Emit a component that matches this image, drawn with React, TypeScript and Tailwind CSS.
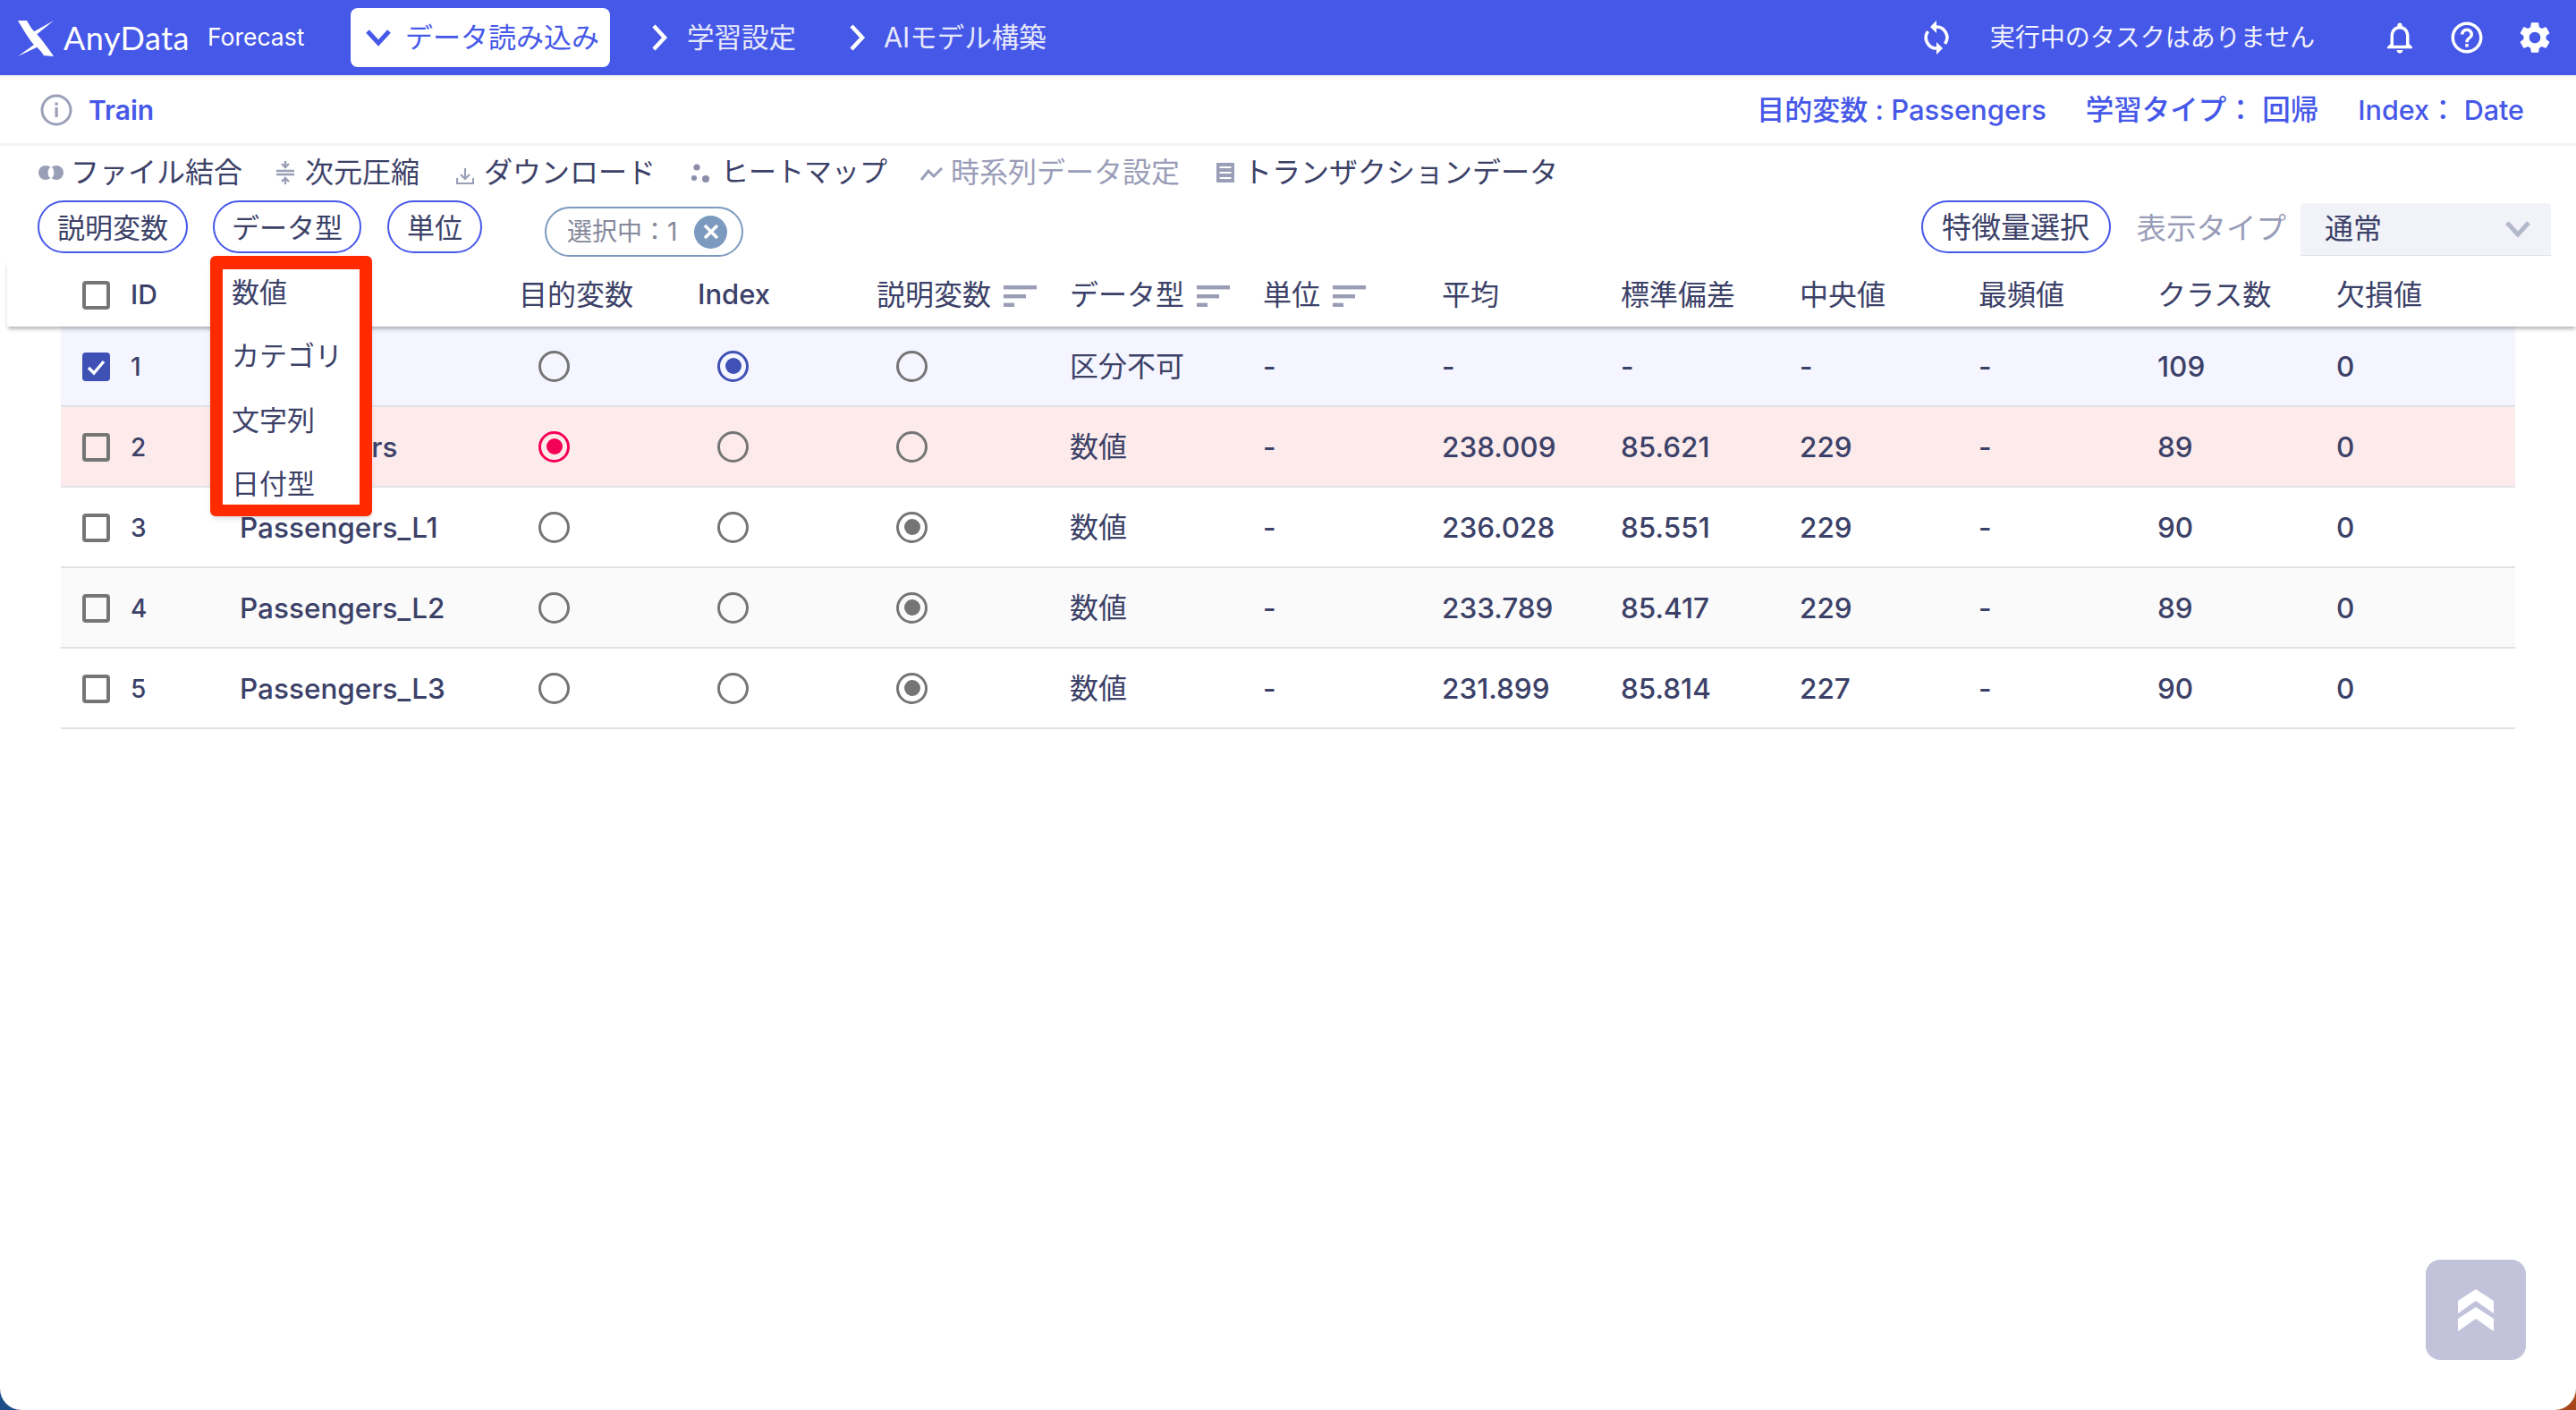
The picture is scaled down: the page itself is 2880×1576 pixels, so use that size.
import { MdNotificationsNone, MdHelpOutline, MdSettings } from "react-icons/md";

const FONT = "font-['Inter','Noto_Sans_CJK_JP',sans-serif]";

const COLS = "grid grid-cols-[200px_312px_200px_200px_216px_216px_200px_200px_200px_200px_200px_200px_199px] items-center";

type Row = {
  id: number;
  name: string;
  target?: boolean;
  index?: boolean;
  expl?: boolean;
  type: string;
  vals: string[];
  bg: string;
  checked?: boolean;
};

const rows: Row[] = [
  { id: 1, name: "Date", index: true, checked: true, type: "区分不可", vals: ["-", "-", "-", "-", "-", "109", "0"], bg: "bg-[#f4f5fe]" },
  { id: 2, name: "Passengers", target: true, type: "数値", vals: ["-", "238.009", "85.621", "229", "-", "89", "0"], bg: "bg-[#fdebeb]" },
  { id: 3, name: "Passengers_L1", expl: true, type: "数値", vals: ["-", "236.028", "85.551", "229", "-", "90", "0"], bg: "bg-white" },
  { id: 4, name: "Passengers_L2", expl: true, type: "数値", vals: ["-", "233.789", "85.417", "229", "-", "89", "0"], bg: "bg-[#fafafa]" },
  { id: 5, name: "Passengers_L3", expl: true, type: "数値", vals: ["-", "231.899", "85.814", "227", "-", "90", "0"], bg: "bg-white" },
];

function Logo() {
  return (
    <svg width="40" height="41" viewBox="0 0 40 41" className="shrink-0">
      <path d="M0 1 L10 1 C14 8 16 11 20 15 C26 21 34 32 40 41 L29 40 C25 34 21 30 17 27 C11 20 5 9 0 1 Z" fill="#fff" />
      <polygon points="40,1 15,15 18,19" fill="#fff" />
      <polygon points="0,41 22,25 25,29" fill="#fff" />
    </svg>
  );
}

function SyncIcon() {
  return (
    <svg width="30" height="38" viewBox="0 0 30 38" className="shrink-0">
      <path d="M14 7 A12 12 0 0 1 24.5 26" fill="none" stroke="#fff" strokeWidth="3.6" />
      <path d="M16 31 A12 12 0 0 1 5.5 12" fill="none" stroke="#fff" strokeWidth="3.6" />
      <polygon points="8,7 15,0 15,14" fill="#fff" />
      <polygon points="22,31 15,24 15,38" fill="#fff" />
    </svg>
  );
}

function ChevronDown({ className }: { className?: string }) {
  return (
    <svg width="30" height="20" viewBox="0 0 30 20" className={className}>
      <path d="M3 3 L15 16 L27 3" fill="none" stroke="currentColor" strokeWidth="5" />
    </svg>
  );
}

function ChevronRight() {
  return (
    <svg width="20" height="30" viewBox="0 0 20 30" className="text-white">
      <path d="M4 2 L16 15 L4 28" fill="none" stroke="currentColor" strokeWidth="4.5" />
    </svg>
  );
}

function SortIcon() {
  return (
    <svg width="37" height="24" viewBox="0 0 37 24" className="ml-[14px] mt-[2px] shrink-0">
      <rect x="0" y="0" width="37" height="4.4" fill="#9a9db5" />
      <rect x="0" y="10" width="25" height="4.4" fill="#9a9db5" />
      <rect x="0" y="19.6" width="12" height="4.4" fill="#9a9db5" />
    </svg>
  );
}

function Chip({ children, className }: { children: React.ReactNode; className?: string }) {
  return (
    <div className={`h-[59px] flex items-center justify-center pt-[3px] rounded-full border-2 border-[#4658e8] text-[#3c4168] ${className ?? ""}`}>
      {children}
    </div>
  );
}

function Check({ checked }: { checked?: boolean }) {
  if (checked) {
    return (
      <div className="w-[31px] h-[32px] rounded-[4px] bg-[#3f51b5] flex items-center justify-center">
        <svg width="25" height="25" viewBox="0 0 25 25">
          <path d="M4 13 L10 19 L21 6" fill="none" stroke="#fff" strokeWidth="3.4" />
        </svg>
      </div>
    );
  }
  return <div className="w-[31px] h-[32px] rounded-[4px] border-[4px] border-[#757575]" />;
}

function Radio({ on, color }: { on?: boolean; color?: string }) {
  if (on && color === "red") {
    return (
      <div className="w-[35px] h-[35px] rounded-full border-[3px] border-[#f50057] flex items-center justify-center ml-[22px] -mt-[2px]">
        <div className="w-[18px] h-[18px] rounded-full bg-[#f50057]" />
      </div>
    );
  }
  if (on && color === "blue") {
    return (
      <div className="w-[35px] h-[35px] rounded-full border-[3px] border-[#3f51b5] flex items-center justify-center ml-[22px] -mt-[2px]">
        <div className="w-[18px] h-[18px] rounded-full bg-[#3f51b5]" />
      </div>
    );
  }
  if (on) {
    return (
      <div className="w-[35px] h-[35px] rounded-full border-[3px] border-[#757575] flex items-center justify-center ml-[22px] -mt-[2px]">
        <div className="w-[18px] h-[18px] rounded-full bg-[#757575]" />
      </div>
    );
  }
  return <div className="w-[35px] h-[35px] rounded-full border-[3px] border-[#757575] ml-[22px] -mt-[2px]" />;
}

export default function App() {
  return (
    <div className="w-[2880px] h-[1576px] bg-[linear-gradient(90deg,#1d4e89_50%,#a8481a_50%)]">
      <div className={`relative w-[2880px] h-[1576px] overflow-hidden rounded-b-[24px] bg-white ${FONT}`}>
        {/* top bar */}
        <div className="h-[84px] bg-[#4658e8] flex items-center text-white">
          <div className="ml-[20px]">
            <Logo />
          </div>
          <span className="ml-[11px] w-[140px] text-[36px] font-['Lato',sans-serif] tracking-[0.5px]">AnyData</span>
          <span className="ml-[21px] w-[110px] text-[26.5px] font-['Inter',sans-serif] whitespace-nowrap">Forecast</span>
          <div className="ml-[50px] w-[290px] h-[66px] bg-white rounded-[8px] flex items-center text-[#4658e8]">
            <ChevronDown className="ml-[16px]" />
            <span className="ml-[15px] text-[31px] whitespace-nowrap">データ読み込み</span>
          </div>
          <div className="ml-[45px]">
            <ChevronRight />
          </div>
          <span className="ml-[21px] text-[30.5px] text-[#e6e8fc]">学習設定</span>
          <div className="ml-[58px]">
            <ChevronRight />
          </div>
          <span className="ml-[20px] text-[30.5px] text-[#e6e8fc]">AIモデル構築</span>
          <div className="ml-auto flex items-center">
            <SyncIcon />
            <span className="ml-[45px] text-[28px] text-[#f2f3fe]">実行中のタスクはありません</span>
            <MdNotificationsNone size={42} className="ml-[74px]" />
            <MdHelpOutline size={42} className="ml-[33px]" />
            <MdSettings size={42} className="ml-[34px] mr-[25px]" />
          </div>
        </div>

        {/* dataset info */}
        <div className="h-[79px] border-t-2 border-b-[3px] border-[#f3f3f8] flex items-center text-[#4658e8] font-medium">
          <svg width="36" height="36" viewBox="0 0 36 36" className="ml-[45px]">
            <circle cx="18" cy="18" r="16" fill="none" stroke="#9a9fb8" strokeWidth="3" />
            <rect x="16.5" y="15" width="3.2" height="11" fill="#9a9fb8" />
            <rect x="16.5" y="9.5" width="3.2" height="3.2" fill="#9a9fb8" />
          </svg>
          <span className="ml-[18px] text-[30px] font-semibold">Train</span>
          <span className="ml-auto whitespace-nowrap text-[31px]">目的変数 : Passengers</span>
          <span className="ml-[44px] whitespace-nowrap text-[31.5px]">学習タイプ： 回帰</span>
          <span className="ml-[44px] mr-[58px] whitespace-nowrap text-[30.5px]">Index： Date</span>
        </div>

        {/* tools */}
        <div className="h-[61px] flex items-center text-[#3c4168] text-[32px] pb-[2px]">
          <svg width="28" height="16" viewBox="0 0 28 16" className="ml-[43px]">
            <circle cx="8" cy="8" r="8" fill="#9a9fb8" />
            <circle cx="20" cy="8" r="8" fill="#9a9fb8" />
            <ellipse cx="14" cy="8" rx="3.4" ry="6" fill="#fff" />
          </svg>
          <span className="ml-[8px] whitespace-nowrap">ファイル結合</span>
          <svg width="20" height="26" viewBox="0 0 20 26" className="ml-[38px]">
            <path d="M10 0 V6 M6 3 L10 7 L14 3 M10 26 V20 M6 23 L10 19 L14 23" fill="none" stroke="#9a9fb8" strokeWidth="2.4" />
            <path d="M0 11 H20 M0 15 H20" stroke="#9a9fb8" strokeWidth="2.4" />
          </svg>
          <span className="ml-[12px] whitespace-nowrap">次元圧縮</span>
          <svg width="20" height="20" viewBox="0 0 20 20" className="ml-[41px] mt-[8px]">
            <path d="M10 1 V12 M5 8 L10 13 L15 8 M1 12 V18 H19 V12" fill="none" stroke="#9a9fb8" strokeWidth="2.2" />
          </svg>
          <span className="ml-[11px] whitespace-nowrap">ダウンロード</span>
          <svg width="20" height="22" viewBox="0 0 20 22" className="ml-[40px] mt-[2px]">
            <circle cx="6" cy="4" r="3.6" fill="#8a8ea8" />
            <circle cx="3" cy="16" r="3" fill="#8a8ea8" />
            <circle cx="16" cy="17" r="4" fill="#8a8ea8" />
          </svg>
          <span className="ml-[13px] whitespace-nowrap text-[31px]">ヒートマップ</span>
          <svg width="27" height="18" viewBox="0 0 27 18" className="ml-[36px] mt-[2px]">
            <path d="M2 16 L10 6 L16 12 L25 3" fill="none" stroke="#9a9fb8" strokeWidth="3" />
          </svg>
          <span className="ml-[8px] whitespace-nowrap text-[#9a9db8]">時系列データ設定</span>
          <svg width="22" height="24" viewBox="0 0 22 24" className="ml-[40px]">
            <path d="M1 1 H21 V23 H1 Z" fill="#9a9fb8" />
            <path d="M4.5 6 H17.5 M4.5 12 H17.5 M4.5 18 H17.5" stroke="#fff" strokeWidth="2" />
          </svg>
          <span className="ml-[9px] whitespace-nowrap">トランザクションデータ</span>
        </div>

        {/* filter chips */}
        <div className="h-[67px] flex items-start">
          <Chip className="ml-[42px] w-[168px] text-[31px]">説明変数</Chip>
          <Chip className="ml-[28px] w-[166px] text-[31px]">データ型</Chip>
          <Chip className="ml-[29px] w-[106px] text-[31px]">単位</Chip>
          <div className="ml-[70px] mt-[7px] w-[222px] h-[56px] rounded-full border-2 border-[#7c9abf] flex items-center text-[#85889a] text-[28px]">
            <span className="ml-[23px] whitespace-nowrap">選択中：1</span>
            <div className="ml-[19px] w-[37px] h-[37px] rounded-full bg-[#7c9abf] flex items-center justify-center">
              <svg width="20" height="20" viewBox="0 0 20 20">
                <path d="M3 3 L17 17 M17 3 L3 17" stroke="#fff" strokeWidth="3.6" />
              </svg>
            </div>
          </div>
          <Chip className="ml-auto w-[212px] text-[33px]">特徴量選択</Chip>
          <span className="ml-[29px] h-[59px] pt-[3px] flex items-center text-[#9a9db8] text-[33.5px] whitespace-nowrap">表示タイプ</span>
          <div className="ml-[16px] mr-[28px] mt-[3px] w-[280px] h-[59px] bg-[#f1f3f8] rounded-t-[4px] border-b border-[#e0e2ea] flex items-center justify-between text-[#3c4168] text-[32px]">
            <span className="ml-[27px]">通常</span>
            <ChevronDown className="mr-[22px] text-[#b4b8cc]" />
          </div>
        </div>

        {/* table head */}
        <div className={`${COLS} relative z-10 ml-[8px] h-[74px] pl-[60px] pt-[3px] bg-white shadow-[0_4px_4px_-1px_rgba(60,60,70,0.35)] text-[#3c4168] text-[32px]`}>
          <div className="flex items-center pl-[24px]">
            <Check />
            <span className="ml-[23px] text-[30px] font-medium">ID</span>
          </div>
          <div />
          <div>目的変数</div>
          <div className="text-[31px] font-medium">Index</div>
          <div className="flex items-center">
            説明変数
            <SortIcon />
          </div>
          <div className="flex items-center">
            データ型
            <SortIcon />
          </div>
          <div className="flex items-center">
            単位
            <SortIcon />
          </div>
          <div>平均</div>
          <div>標準偏差</div>
          <div>中央値</div>
          <div>最頻値</div>
          <div>クラス数</div>
          <div>欠損値</div>
        </div>

        {/* table body */}
        <div className="mx-[68px] text-[#3c4168] text-[31.5px] font-medium">
          {rows.map((r) => (
            <div key={r.id} className={`${COLS} h-[90px] pt-[2px] border-b-2 border-[#e2e2e6] ${r.bg}`}>
              <div className="flex items-center pl-[24px]">
                <Check checked={r.checked} />
                <span className="ml-[23px] text-[28px]">{r.id}</span>
              </div>
              <div>{r.name}</div>
              <div>
                <Radio on={r.target} color="red" />
              </div>
              <div>
                <Radio on={r.index} color="blue" />
              </div>
              <div>
                <Radio on={r.expl} />
              </div>
              <div className="text-[32px] font-normal">{r.type}</div>
              {r.vals.map((v, i) => (
                <div key={i}>{v}</div>
              ))}
            </div>
          ))}
        </div>

        {/* data type dropdown with red annotation */}
        <div className="absolute left-[235px] top-[286px] z-20 w-[181px] h-[291px] rounded-[6px] border-x-[14px] border-t-[15px] border-b-[13px] border-[#ff2a00] bg-white shadow-md text-[#3c4168] text-[31px]">
          <div className="flex flex-col -mt-[10px]">
            <div className="h-[71.5px] pl-[10px] flex items-center">数値</div>
            <div className="h-[71.5px] pl-[10px] flex items-center whitespace-nowrap">カテゴリ</div>
            <div className="h-[71.5px] pl-[10px] flex items-center">文字列</div>
            <div className="h-[71.5px] pl-[10px] flex items-center">日付型</div>
          </div>
        </div>

        {/* back to top */}
        <div className="absolute left-[2712px] top-[1408px] w-[112px] h-[112px] rounded-[16px] bg-[#c2c3db] flex items-center justify-center">
          <svg width="40" height="47" viewBox="0 0 40 47">
            <polygon points="20,0 40,13 40,27 20,13 0,27 0,13" fill="#fff" />
            <polygon points="20,20 40,33 40,47 20,33 0,47 0,33" fill="#fff" />
          </svg>
        </div>
      </div>
    </div>
  );
}
